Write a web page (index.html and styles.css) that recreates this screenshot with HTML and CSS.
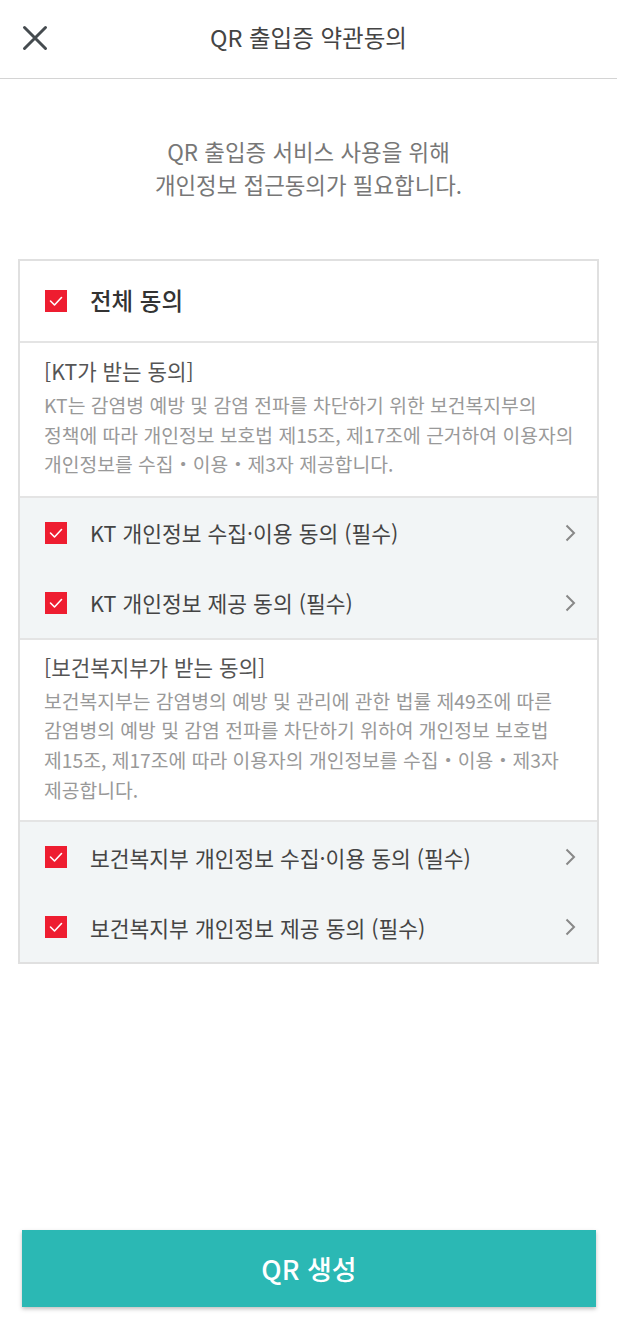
FILE: index.html
```html
<!DOCTYPE html>
<html lang="ko">
<head>
  <meta charset="UTF-8">
  <meta name="viewport" content="width=device-width, initial-scale=1.0">
  <title>QR 출입증 약관동의</title>
  <link rel="stylesheet" href="styles.css">
</head>
<body>
  <div class="page">
    <header class="top_bar">
      <a href="#none" class="close_btn" title="닫기">
        <svg width="26" height="26" viewBox="0 0 26 26"><path d="M2.5 2.5L23.5 23.5M23.5 2.5L2.5 23.5" stroke="#454b4f" stroke-width="3" stroke-linecap="round" fill="none"/></svg>
      </a>
      <h1 class="top_tit">QR 출입증 약관동의</h1>
    </header>

    <p class="intro">QR 출입증 서비스 사용을 위해<br>개인정보 접근동의가 필요합니다.</p>

    <div class="agree_box">
      <div class="agree_all">
        <span class="chk"><svg width="22" height="22" viewBox="0 0 22 22"><path d="M5.5 11L9.5 15L16.5 7.5" stroke="#fff" stroke-width="1.6" fill="none" stroke-linecap="round" stroke-linejoin="round"/></svg></span>
        <span class="all_txt">전체 동의</span>
      </div>

      <div class="agree_info">
        <h2 class="info_tit">[KT가 받는 동의]</h2>
        <p class="info_txt">KT는 감염병 예방 및 감염 전파를 차단하기 위한 보건복지부의<br>정책에 따라 개인정보 보호법 제15조, 제17조에 근거하여 이용자의<br>개인정보를 수집・이용・제3자 제공합니다.</p>
      </div>
      <ul class="agree_list">
        <li>
          <span class="chk"><svg width="22" height="22" viewBox="0 0 22 22"><path d="M5.5 11L9.5 15L16.5 7.5" stroke="#fff" stroke-width="1.6" fill="none" stroke-linecap="round" stroke-linejoin="round"/></svg></span>
          <span class="item_txt">KT 개인정보 수집·이용 동의 (필수)</span>
          <svg class="arrow" width="11" height="18" viewBox="0 0 11 18"><path d="M1.5 1.5L9 9L1.5 16.5" stroke="#888" stroke-width="2" fill="none"/></svg>
        </li>
        <li>
          <span class="chk"><svg width="22" height="22" viewBox="0 0 22 22"><path d="M5.5 11L9.5 15L16.5 7.5" stroke="#fff" stroke-width="1.6" fill="none" stroke-linecap="round" stroke-linejoin="round"/></svg></span>
          <span class="item_txt">KT 개인정보 제공 동의 (필수)</span>
          <svg class="arrow" width="11" height="18" viewBox="0 0 11 18"><path d="M1.5 1.5L9 9L1.5 16.5" stroke="#888" stroke-width="2" fill="none"/></svg>
        </li>
      </ul>

      <div class="agree_info info2">
        <h2 class="info_tit">[보건복지부가 받는 동의]</h2>
        <p class="info_txt">보건복지부는 감염병의 예방 및 관리에 관한 법률 제49조에 따른<br>감염병의 예방 및 감염 전파를 차단하기 위하여 개인정보 보호법<br>제15조, 제17조에 따라 이용자의 개인정보를 수집・이용・제3자<br>제공합니다.</p>
      </div>
      <ul class="agree_list">
        <li>
          <span class="chk"><svg width="22" height="22" viewBox="0 0 22 22"><path d="M5.5 11L9.5 15L16.5 7.5" stroke="#fff" stroke-width="1.6" fill="none" stroke-linecap="round" stroke-linejoin="round"/></svg></span>
          <span class="item_txt">보건복지부 개인정보 수집·이용 동의 (필수)</span>
          <svg class="arrow" width="11" height="18" viewBox="0 0 11 18"><path d="M1.5 1.5L9 9L1.5 16.5" stroke="#888" stroke-width="2" fill="none"/></svg>
        </li>
        <li>
          <span class="chk"><svg width="22" height="22" viewBox="0 0 22 22"><path d="M5.5 11L9.5 15L16.5 7.5" stroke="#fff" stroke-width="1.6" fill="none" stroke-linecap="round" stroke-linejoin="round"/></svg></span>
          <span class="item_txt">보건복지부 개인정보 제공 동의 (필수)</span>
          <svg class="arrow" width="11" height="18" viewBox="0 0 11 18"><path d="M1.5 1.5L9 9L1.5 16.5" stroke="#888" stroke-width="2" fill="none"/></svg>
        </li>
      </ul>
    </div>

    <button class="qr_btn">QR 생성</button>
  </div>
</body>
</html>
```

FILE: styles.css
```css
*{margin: 0; padding: 0; box-sizing: border-box;}
body{
  font-family: "Noto Sans CJK KR", "Noto Sans", sans-serif;
  background: #fff;
  color: #333;
}
.page{
  min-height: 1320px;
  display: flex;
  flex-direction: column;
}
.top_bar{
  position: relative;
  height: 79px;
  border-bottom: 1px solid #d4d4d4;
  display: flex;
  align-items: center;
  justify-content: center;
}
.close_btn{
  position: absolute;
  left: 22px; top: 25px;
  width: 26px; height: 26px;
  display: block;
}
.close_btn svg{display: block;}
.top_tit{
  font-size: 23.5px;
  font-weight: 400;
  color: #444;
  line-height: 30px;
  margin-top: -4px;
}
.intro{
  margin: 56px 0 58px;
  text-align: center;
  font-size: 22.4px;
  line-height: 33px;
  color: #777;
}
.agree_box{
  margin: 0 18px;
  border: 2px solid #e0e0e0;
}
.chk{
  display: block;
  flex: none;
  width: 22px; height: 22px;
  background: #ee1d30;
}
.chk svg{display: block;}
.agree_all{
  height: 80px;
  display: flex;
  align-items: center;
  padding-left: 25px;
  gap: 23px;
}
.all_txt{
  font-size: 23.5px;
  font-weight: 500;
  color: #333;
  margin-top: -2px;
}
.agree_info{
  border-top: 2px solid #e4e4e4;
  padding: 13px 10px 16px 24px;
}
.agree_info.info2{padding-top: 12px; padding-bottom: 15px;}
.info_tit{
  font-size: 21.2px;
  font-weight: 400;
  line-height: 30px;
  color: #555;
  margin-bottom: 5px;
}
.info_txt{
  font-size: 19.3px;
  line-height: 29.6px;
  color: #999;
}
.agree_list{
  list-style: none;
  border-top: 2px solid #e4e4e4;
  background: #f2f5f6;
}
.agree_list li{
  height: 70px;
  display: flex;
  align-items: center;
  padding: 0 21px 0 25px;
  gap: 23px;
}
.item_txt{
  flex: 1;
  font-size: 21.5px;
  color: #444;
}
.arrow{display: block; flex: none;}
.qr_btn{
  margin: auto 21px 13px 22px;
  height: 77px;
  border: none;
  background: #2bb8b4;
  color: #fff;
  font-family: inherit;
  font-size: 27px;
  font-weight: 500;
  box-shadow: 0 2px 4px rgba(0,0,0,0.25);
}
```
